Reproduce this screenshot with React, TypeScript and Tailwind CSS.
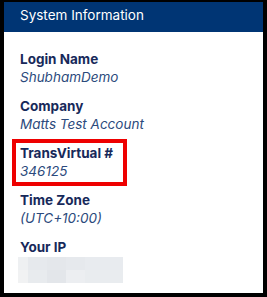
import React from 'react';

const items = [
  { label: 'Login Name', value: 'ShubhamDemo' },
  { label: 'Company', value: 'Matts Test Account' },
  { label: 'TransVirtual #', value: '346125' },
  { label: 'Time Zone', value: '(UTC+10:00)' },
];

export default function App() {
  return (
    <div className="w-[267px] h-[297px] bg-black pt-[2px] pl-[4px] pr-[4px] pb-[4px] font-['Inter',sans-serif]">
      <div className="relative h-full bg-white">
        {/* Header */}
        <div className="h-[30px] bg-[#003574] px-4">
          <div className="text-white text-[13.5px] leading-[26px]">System Information</div>
        </div>

        {/* Body */}
        <div className="pl-4 pt-[18px] flex flex-col gap-[11px]">
          {items.map((it) => (
            <div key={it.label}>
              <div className="text-[13.5px] leading-[18px] font-bold text-[#17295a]">{it.label}</div>
              <div className="text-[13.5px] leading-[18px] italic text-[#2b4a7c]">{it.value}</div>
            </div>
          ))}
          <div>
            <div className="text-[13.5px] leading-[18px] font-bold text-[#17295a]">Your IP</div>
            {/* blurred address */}
            <div className="-ml-[2px] mt-[1px] w-[105px] h-[26px] flex flex-col">
              <div className="flex h-[13px]">
                <div className="w-[10px] bg-[#eef0f2]" />
                <div className="w-[19px] bg-[#e6e9ed]" />
                <div className="w-[19px] bg-[#e4e7eb]" />
                <div className="w-[19px] bg-[#e6e9ed]" />
                <div className="w-[38px] bg-[#e8ebef]" />
              </div>
              <div className="flex h-[13px]">
                <div className="w-[10px] bg-[#f1f2f3]" />
                <div className="w-[19px] bg-[#e8ebee]" />
                <div className="w-[19px] bg-[#e3e6ea]" />
                <div className="w-[19px] bg-[#eceef1]" />
                <div className="w-[38px] bg-[#e9ecef]" />
              </div>
            </div>
          </div>
        </div>

        {/* highlight annotation */}
        <div className="absolute left-[8px] top-[137px] w-[115px] h-[47px] border-4 border-[#ee0000]" />
      </div>
    </div>
  );
}
